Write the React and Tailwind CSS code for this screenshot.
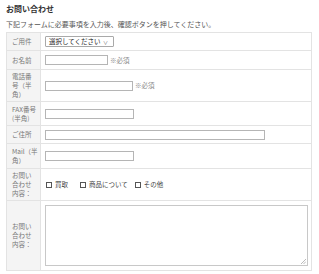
import React from 'react';

const font = { fontFamily: '"Noto Sans CJK JP", "Noto Sans", sans-serif' };

function Row({ lines, h, children }) {
  return (
    <tr className="border-b border-[#e3e3e3]">
      <td className={`${h} bg-[#f4f4f4] border-r border-[#e3e3e3] pl-[5px] pr-[1px] py-0 align-middle text-[6.5px] leading-[9px] text-[#777]`}>
        {lines.map((l) => (
          <div key={l}>{l}</div>
        ))}
      </td>
      <td className="pl-[4px] pr-[4px] py-0 align-middle">{children}</td>
    </tr>
  );
}

function Box({ w }) {
  return <div className={`h-[10px] border border-[#b5b5b5] bg-white ${w}`} />;
}

function Check({ label, mr }) {
  return (
    <span className={`inline-flex items-center gap-[3px] ${mr}`}>
      <span className="inline-block w-[6px] h-[6px] border border-[#555] bg-white" />
      <span>{label}</span>
    </span>
  );
}

export default function App() {
  return (
    <div className="w-[319px] h-[274px] overflow-hidden bg-white px-[6px] pt-[3px] text-[7px] leading-[9px] text-[#444]" style={font}>
      <h2 className="text-[8px] leading-[12px] font-bold text-[#333]">お問い合わせ</h2>
      <p className="mt-[5px] text-[#555]">下記フォームに必要事項を入力後、確認ボタンを押してください。</p>
      <table className="mt-[3px] w-[306px] table-fixed border-collapse border border-[#e3e3e3]">
        <colgroup>
          <col className="w-[34px]" />
          <col />
        </colgroup>
        <tbody>
          <Row lines={['ご用件']} h="h-[18px]">
            <div className="flex items-center justify-between w-[69px] h-[11px] border border-[#a9a9a9] rounded-[1px] pl-[3px] pr-[5px] text-[6.5px] text-[#222]">
              <span>選択してください</span>
              <span className="text-[5px] text-[#666]">∨</span>
            </div>
          </Row>
          <Row lines={['お名前']} h="h-[19px]">
            <div className="flex items-center gap-[2px]">
              <Box w="w-[63px]" />
              <span className="text-[6.5px] text-[#888]">※必須</span>
            </div>
          </Row>
          <Row lines={['電話番', '号（半', '角）']} h="h-[32px]">
            <div className="flex items-center gap-[2px]">
              <Box w="w-[88px]" />
              <span className="text-[6.5px] text-[#888]">※必須</span>
            </div>
          </Row>
          <Row lines={['FAX番号', '(半角)']} h="h-[24px]">
            <Box w="w-[89px]" />
          </Row>
          <Row lines={['ご住所']} h="h-[18px]">
            <Box w="w-[220px]" />
          </Row>
          <Row lines={['Mail（半', '角）']} h="h-[25px]">
            <Box w="w-[89px]" />
          </Row>
          <Row lines={['お問い', '合わせ', '内容：']} h="h-[32px]">
            <div className="flex items-center text-[6.5px] pl-[1px]">
              <Check label="買取" mr="mr-[12px]" />
              <Check label="商品について" mr="mr-[7px]" />
              <Check label="その他" mr="" />
            </div>
          </Row>
          <Row lines={['お問い', '合わせ', '内容：']} h="h-[70px]">
            <div className="relative h-[61px] w-[263px] border border-[#c8c8c8] bg-white">
              <svg className="absolute right-[1px] bottom-[1px]" width="5" height="5" viewBox="0 0 5 5">
                <path d="M5 0 L0 5 M5 2.5 L2.5 5" stroke="#aaa" strokeWidth="0.8" />
              </svg>
            </div>
          </Row>
        </tbody>
      </table>
    </div>
  );
}
